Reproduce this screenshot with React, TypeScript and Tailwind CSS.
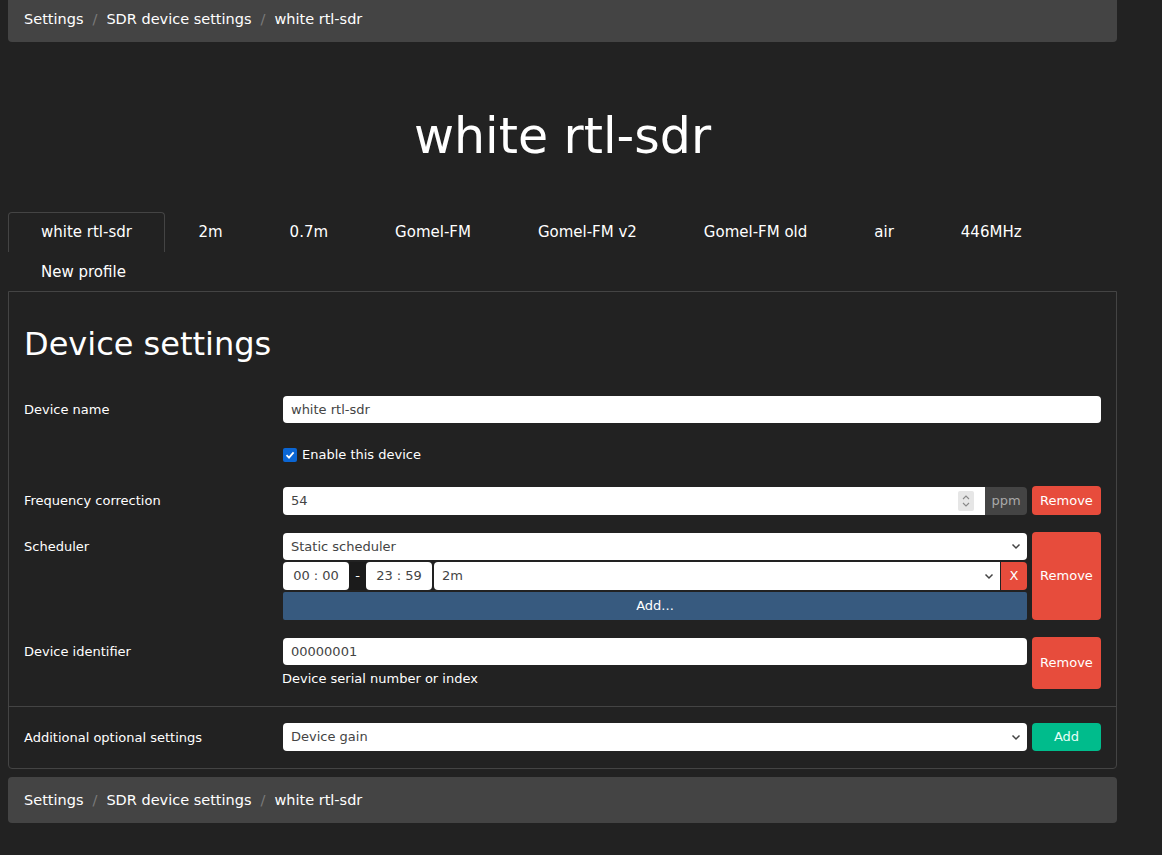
import React from "react";

const Chevron = ({ className = "" }: { className?: string }) => (
  <svg width="10" height="7" viewBox="0 0 10 7" className={className}>
    <path d="M1.5 1.5 L5 5 L8.5 1.5" fill="none" stroke="#444" strokeWidth="1.5" />
  </svg>
);

const Breadcrumb = ({ extra = "" }: { extra?: string }) => (
  <div className={`h-[46px] rounded-[4px] bg-[#444] flex items-center px-4 pt-[2px] text-[14.5px] text-white ${extra}`}>
    <span>Settings</span>
    <span className="px-[9px] text-[#7a7a7a]">/</span>
    <span>SDR device settings</span>
    <span className="px-[9px] text-[#7a7a7a]">/</span>
    <span>white rtl-sdr</span>
  </div>
);

const RemoveBtn = ({ h }: { h: string }) => (
  <div className={`w-[69px] ${h} shrink-0 rounded-[4px] bg-[#e74c3c] flex items-center justify-center text-[13px] text-white`}>
    Remove
  </div>
);

const tabs = ["white rtl-sdr", "2m", "0.7m", "Gomel-FM", "Gomel-FM v2", "Gomel-FM old", "air", "446MHz", "New profile"];

export default function App() {
  return (
    <div className="min-h-[855px] bg-[#222] font-['DejaVu_Sans',sans-serif] text-white overflow-hidden">
      <div className="ml-2 w-[1109px]">
        <Breadcrumb extra="-mt-[4px]" />
        <div className="mt-[66px] h-[58px] text-center text-[49px] leading-[58px]">white rtl-sdr</div>
        <div className="mt-[46px] flex flex-wrap text-[15px]">
          {tabs.map((t, i) =>
            i === 0 ? (
              <div key={t} className="h-10 px-[32px] flex items-center border border-b-0 border-[#444] rounded-t-[4px]">
                {t}
              </div>
            ) : i === 8 ? (
              <div key={t} className="h-10 px-[33px] flex items-center">
                {t}
              </div>
            ) : (
              <div key={t} className="h-10 px-[33.5px] flex items-center">
                {t}
              </div>
            )
          )}
        </div>
        <div className="-mt-px border border-[#444] rounded-b-[4px]">
          <div className="px-[15px] pt-[33px] pb-[17px] border-b border-[#444]">
            <h2 className="text-[32px] leading-[38px]">Device settings</h2>
            <div className="mt-[33px] flex flex-col gap-[17px] text-[13px]">
              <div className="grid grid-cols-[259px_1fr]">
                <div className="h-[27px] flex items-center">Device name</div>
                <div className="h-[27px] rounded-[4px] bg-white text-[#444] flex items-center px-2">white rtl-sdr</div>
              </div>
              <div className="grid grid-cols-[259px_1fr]">
                <div />
                <div className="h-[29px] flex items-center gap-[5px]">
                  <div className="w-[14px] h-[14px] rounded-[2px] bg-[#0b66d4] flex items-center justify-center">
                    <svg width="10" height="10" viewBox="0 0 10 10">
                      <path d="M1.5 5.2 L4 7.6 L8.6 2.4" fill="none" stroke="white" strokeWidth="1.8" />
                    </svg>
                  </div>
                  <span>Enable this device</span>
                </div>
              </div>
              <div className="grid grid-cols-[259px_1fr]">
                <div className="h-[29px] flex items-center pt-px">Frequency correction</div>
                <div className="flex gap-[5px]">
                  <div className="flex-1 flex h-[28px] mt-px">
                    <div className="flex-1 bg-white rounded-l-[4px] text-[#444] flex items-center pl-2 pr-[11px]">
                      <span className="flex-1">54</span>
                      <div className="w-[16px] h-[20px] rounded-[2px] bg-[#e6e6e6] flex flex-col items-center justify-center gap-[2px]">
                        <svg width="8" height="5" viewBox="0 0 8 5"><path d="M1 4 L4 1 L7 4" fill="none" stroke="#888" strokeWidth="1.1" /></svg>
                        <svg width="8" height="5" viewBox="0 0 8 5"><path d="M1 1 L4 4 L7 1" fill="none" stroke="#888" strokeWidth="1.1" /></svg>
                      </div>
                    </div>
                    <div className="w-[42px] bg-[#444] rounded-r-[4px] flex items-center justify-center text-[#a9a9a9]">ppm</div>
                  </div>
                  <RemoveBtn h="h-[29px]" />
                </div>
              </div>
              <div className="grid grid-cols-[259px_1fr]">
                <div className="h-[28px] flex items-center pt-px">Scheduler</div>
                <div className="flex gap-[5px]">
                  <div className="flex-1 flex flex-col gap-[2px] pt-px text-[#444]">
                    <div className="h-[27px] bg-white rounded-[4px] flex items-center pl-2 pr-[6px]">
                      <span className="flex-1">Static scheduler</span>
                      <Chevron />
                    </div>
                    <div className="h-[28px] flex">
                      <div className="w-[66px] bg-white rounded-[4px] flex items-center justify-center">00 : 00</div>
                      <div className="w-[17px] bg-[#1b1b1b] text-white flex items-center justify-center">-</div>
                      <div className="w-[66px] bg-white rounded-[4px] flex items-center justify-center">23 : 59</div>
                      <div className="ml-[2px] flex-1 bg-white rounded-l-[4px] flex items-center pl-2 pr-[6px]">
                        <span className="flex-1">2m</span>
                        <Chevron />
                      </div>
                      <div className="ml-px w-[26px] bg-[#e74c3c] rounded-r-[4px] text-white flex items-center justify-center">X</div>
                    </div>
                    <div className="h-[28px] bg-[#375a7f] rounded-[2px] text-white flex items-center justify-center">Add...</div>
                  </div>
                  <div className="w-[69px] shrink-0 rounded-[4px] bg-[#e74c3c] flex items-center justify-center text-white">Remove</div>
                </div>
              </div>
              <div className="grid grid-cols-[259px_1fr]">
                <div className="h-[28px] flex items-center pt-px">Device identifier</div>
                <div className="flex gap-[5px]">
                  <div className="flex-1 pt-px">
                    <div className="h-[27px] bg-white rounded-[4px] text-[#444] flex items-center pl-2">00000001</div>
                    <div className="mt-[6px] leading-[16px] -ml-px">Device serial number or index</div>
                  </div>
                  <RemoveBtn h="h-[52px]" />
                </div>
              </div>
            </div>
          </div>
          <div className="px-[15px] pt-[16px] pb-[17px] text-[13px]">
            <div className="grid grid-cols-[259px_1fr]">
              <div className="h-[28px] flex items-center pt-px">Additional optional settings</div>
              <div className="flex gap-[5px]">
                <div className="flex-1 h-[28px] bg-white rounded-[4px] text-[#444] flex items-center pl-2 pr-[6px]">
                  <span className="flex-1">Device gain</span>
                  <Chevron />
                </div>
                <div className="w-[69px] h-[28px] rounded-[4px] bg-[#00bc8c] flex items-center justify-center text-[#e6fff8]">Add</div>
              </div>
            </div>
          </div>
        </div>
        <Breadcrumb extra="mt-[8px]" />
      </div>
    </div>
  );
}
